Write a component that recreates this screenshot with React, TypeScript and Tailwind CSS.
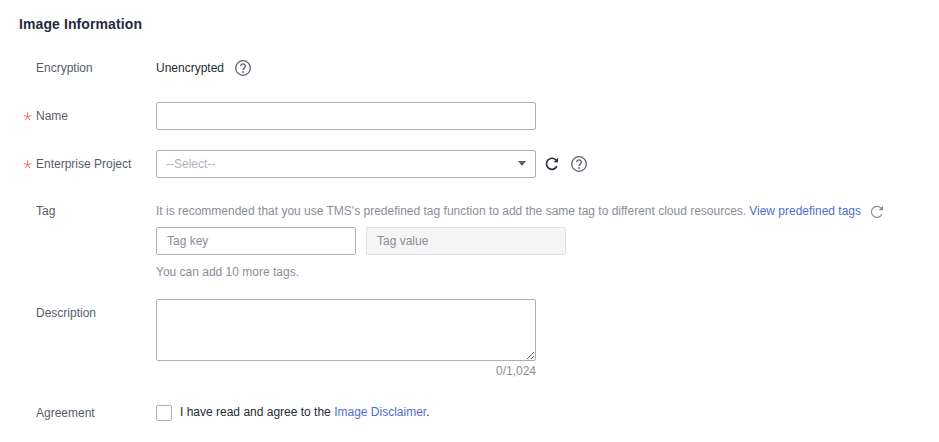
import React from "react";

const Help = () => (
  <svg width="16" height="16" viewBox="0 0 16 16" fill="none" className="shrink-0">
    <circle cx="8" cy="8" r="7.3" stroke="#575d6c" strokeWidth="1.3" />
    <path d="M5.7 6.3a2.3 2.3 0 1 1 3.6 1.8c-.8.5-1.3 1-1.3 1.9" stroke="#575d6c" strokeWidth="1.3" />
    <circle cx="8" cy="12" r=".9" fill="#575d6c" />
  </svg>
);

const Refresh = ({ color, width = 1.6 }: { color: string; width?: number }) => (
  <svg width="14" height="14" viewBox="0 0 14 14" fill="none" className="shrink-0">
    <path d="M11.9 9.2A5.5 5.5 0 1 1 10.9 3" stroke={color} strokeWidth={width} />
    <path d="M13 .8v4.4H8.6z" fill={color} />
  </svg>
);

const Star = () => (
  <svg width="9" height="9" viewBox="0 0 9 9" fill="none" className="absolute left-[-13px] top-[4px]">
    <path d="M4.5 .5v4.2M.6 3.4l3.9 1.3M8.4 3.4L4.5 4.7M2 8.2l2.5-3.5M7 8.2L4.5 4.7" stroke="#f66f6a" strokeWidth="1" />
  </svg>
);

const Label = ({ text, required }: { text: string; required?: boolean }) => (
  <div className="w-[120px] shrink-0 relative text-[#575d6c]">
    {required && <Star />}
    {text}
  </div>
);

export default function App() {
  return (
    <div className="w-[939px] h-[442px] overflow-hidden bg-white pl-[19px] pt-[16px] text-[12px] leading-[16px] text-[#252b3a] font-['Liberation_Sans',Arial,sans-serif]">
      <h2 className="text-[14px] leading-[16px] font-bold text-[#252b3a] tracking-[0.1px]">Image Information</h2>

      <div className="pl-[17px]">
        <div className="flex items-center mt-[28px] h-[16px]">
          <Label text="Encryption" />
          <span className="mt-[-1px]">Unencrypted</span>
          <span className="ml-[11px]"><Help /></span>
        </div>

        <div className="flex items-center mt-[26px]">
          <Label text="Name" required />
          <input className="w-[380px] h-[28px] border border-[#adb0b8] rounded-[2px] outline-none" />
        </div>

        <div className="flex items-center mt-[20px]">
          <Label text="Enterprise Project" required />
          <div className="w-[380px] h-[28px] border border-[#adb0b8] rounded-[2px] flex items-center justify-between pl-[9px] pr-[9px] text-[#adb0b8]">
            <span>--Select--</span>
            <span className="w-0 h-0 border-x-[4px] border-x-transparent border-t-[5px] border-t-[#575d6c] mt-[-1px]"></span>
          </div>
          <span className="ml-[9px]"><Refresh color="#252b3a" /></span>
          <span className="ml-[12px]"><Help /></span>
        </div>

        <div className="flex mt-[25px]">
          <Label text="Tag" />
          <div>
            <div className="flex items-center text-[#8a8e99]">
              <span>It is recommended that you use TMS's predefined tag function to add the same tag to different cloud resources.</span>
              <a className="ml-[3px] text-[#526ecc]">View predefined tags</a>
              <span className="ml-[9px] mt-[2px]"><Refresh color="#8a8e99" width={1.2} /></span>
            </div>
            <div className="flex gap-[10px] mt-[8px]">
              <input
                placeholder="Tag key"
                className="w-[200px] h-[28px] border border-[#adb0b8] rounded-[2px] px-[10px] outline-none placeholder:text-[#8a8e99]"
              />
              <input
                disabled
                placeholder="Tag value"
                className="w-[200px] h-[28px] border border-[#dfe1e6] bg-[#f5f5f6] rounded-[2px] px-[10px] placeholder:text-[#8a8e99]"
              />
            </div>
            <div className="mt-[9px] text-[#8a8e99]">You can add 10 more tags.</div>
          </div>
        </div>

        <div className="flex mt-[19px]">
          <div className="pt-[6px]"><Label text="Description" /></div>
          <div className="w-[380px]">
            <textarea className="block w-[380px] h-[62px] border border-[#adb0b8] rounded-[2px] outline-none resize-y" />
            <div className="text-right text-[#8a8e99] mt-[2px]">0/1,024</div>
          </div>
        </div>

        <div className="flex items-center mt-[26px]">
          <Label text="Agreement" />
          <span className="w-[16px] h-[16px] border border-[#adb0b8] rounded-[2px] bg-white shrink-0"></span>
          <span className="ml-[8px] mt-[-2px]">
            I have read and agree to the <a className="text-[#526ecc]">Image Disclaimer</a>.
          </span>
        </div>
      </div>
    </div>
  );
}
